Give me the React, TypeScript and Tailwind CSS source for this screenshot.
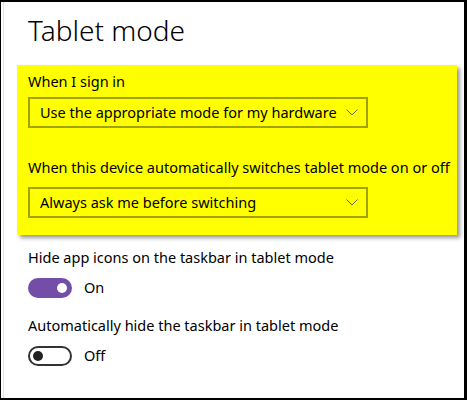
import React from 'react';

const font = { fontFamily: '"Noto Sans", "Open Sans", sans-serif' };

const Chevron = () => (
  <svg width="12" height="7" viewBox="0 0 12 7" fill="none" className="shrink-0">
    <path d="M0.5 0.5 L6 6 L11.5 0.5" stroke="#6b6b30" strokeWidth="1" />
  </svg>
);

const Select = ({ value }: { value: string }) => (
  <div className="flex h-[31px] w-[340px] items-center justify-between border-2 border-[#a3a300] pl-[10px] pr-[8px] text-[14.5px] text-black">
    <span>{value}</span>
    <Chevron />
  </div>
);

const Toggle = ({ on }: { on: boolean }) => (
  <div className="flex items-center gap-3">
    {on ? (
      <div className="flex h-[20px] w-[44px] items-center justify-end rounded-full bg-[#744da9] pr-[5px]">
        <div className="h-[10px] w-[10px] rounded-full bg-white" />
      </div>
    ) : (
      <div className="flex h-[20px] w-[44px] items-center rounded-full border-2 border-[#333] pl-[3px]">
        <div className="h-[10px] w-[10px] rounded-full bg-[#222]" />
      </div>
    )}
    <span className="text-[14.5px] text-black">{on ? 'On' : 'Off'}</span>
  </div>
);

export default function App() {
  return (
    <div style={font} className="h-[400px] w-[467px] border-t-2 border-r-[3px] border-b-2 border-l border-black bg-white">
      <div className="h-full pl-[2px]">
        <div className="h-full border-l border-[#e2e2e2]">
          <h1 className="ml-[24px] pt-[9px] text-[28px] font-light leading-[38px] text-black">Tablet mode</h1>

          <div className="ml-[13px] mt-[16px] h-[170px] w-[440px] bg-[#ffff00] pl-[11px] pt-[6px] shadow-[3px_3px_4px_rgba(0,0,0,0.4)]">
            <div className="text-[14.5px] leading-[20px] text-black">When I sign in</div>
            <div className="mt-[6px]">
              <Select value="Use the appropriate mode for my hardware" />
            </div>
            <div className="mt-[29px] text-[14.5px] leading-[20px] text-black">
              When this device automatically switches tablet mode on or off
            </div>
            <div className="mt-[10px]">
              <Select value="Always ask me before switching" />
            </div>
          </div>

          <div className="ml-[24px] mt-[12px]">
            <div className="text-[14.5px] leading-[20px] text-black">Hide app icons on the taskbar in tablet mode</div>
            <div className="mt-[10px]">
              <Toggle on />
            </div>
            <div className="mt-[16px] text-[14.5px] leading-[20px] text-black">
              Automatically hide the taskbar in tablet mode
            </div>
            <div className="mt-[10px]">
              <Toggle on={false} />
            </div>
          </div>
        </div>
      </div>
    </div>
  );
}
